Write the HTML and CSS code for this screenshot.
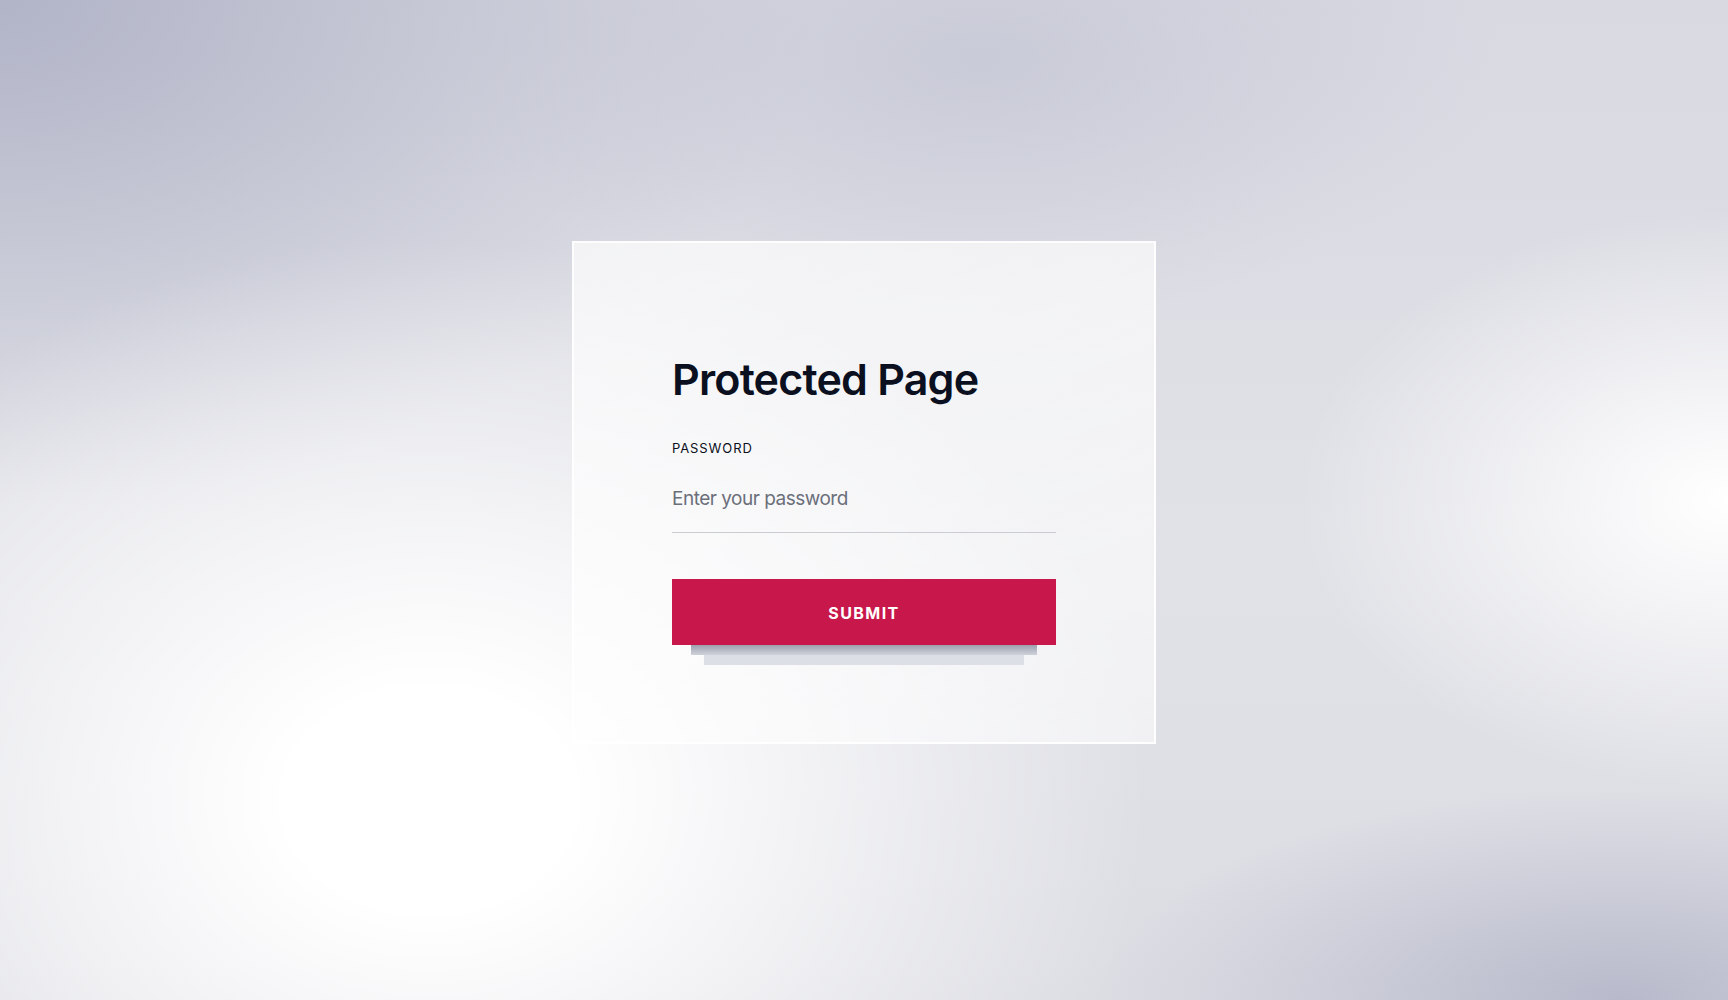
FILE: index.html
```html
<!DOCTYPE html>
<html lang="en">
<head>
<meta charset="UTF-8">
<title>Protected Page</title>
<link rel="stylesheet" href="styles.css">
</head>
<body>

    <div class="page">
        <form class="card" onsubmit="return false;">
            <h1 class="title">Protected Page</h1>

            <label class="label" for="password">Password</label>
            <input class="input" type="password" id="password" placeholder="Enter your password">

            <div class="submit-wrap">
                <button class="submit" type="submit">Submit</button>
            </div>
        </form>
    </div>

</body>
</html>
```

FILE: styles.css
```css
html, body {
    margin: 0;
    padding: 0;
    height: 100%;
}

body {
    font-family: 'Inter', 'Noto Sans', sans-serif;
    color: #0b1020;
    background:
        radial-gradient(ellipse 430px 290px at 1728px 500px, rgba(255,255,255,1) 0%, rgba(255,255,255,0) 100%),
        radial-gradient(ellipse 720px 560px at 430px 800px, rgba(255,255,255,1) 20%, rgba(255,255,255,0) 100%),
        radial-gradient(ellipse 520px 210px at 1620px 1000px, rgba(182,184,202,0.95) 0%, rgba(182,184,202,0) 100%),
        radial-gradient(ellipse 820px 500px at 0px 0px, rgba(177,180,199,1) 0%, rgba(177,180,199,0) 100%),
        radial-gradient(ellipse 520px 260px at 980px 60px, rgba(194,196,211,0.7) 0%, rgba(194,196,211,0) 100%),
        linear-gradient(180deg, #d8d9e1 0%, #e1e2e7 55%, #dcdde3 100%);
}

.page {
    height: 100%;
    display: flex;
    align-items: center;
    justify-content: center;
}

.card {
    box-sizing: border-box;
    width: 584px;
    height: 503px;
    margin-bottom: 15px;
    padding: 110px 98px 0 98px;
    background: linear-gradient(160deg, rgba(255,255,255,0.7) 0%, rgba(255,255,255,0.62) 60%, rgba(255,255,255,0.55) 100%);
    border: 2px solid rgba(255,255,255,0.85);
    display: flex;
    flex-direction: column;
}

.title {
    margin: 0 0 35px 0;
    font-size: 43px;
    line-height: 52px;
    font-weight: 600;
    letter-spacing: -0.8px;
    color: #0b1020;
}

.label {
    font-size: 13px;
    line-height: 16px;
    letter-spacing: 0.9px;
    text-transform: uppercase;
    color: #0b1020;
    margin-bottom: 9px;
}

.input {
    box-sizing: border-box;
    width: 100%;
    height: 68px;
    padding: 0;
    border: none;
    border-bottom: 1px solid #c9ccd3;
    background: transparent;
    font-family: 'Inter', 'Noto Sans', sans-serif;
    font-size: 19px;
    color: #0b1020;
    outline: none;
}
.input::placeholder {
    color: #6b6f7a;
    letter-spacing: -0.5px;
}

.submit-wrap {
    position: relative;
    margin-top: 46px;
    padding-bottom: 20px;
}

.submit-wrap::before {
    content: "";
    position: absolute;
    left: 19px;
    right: 19px;
    bottom: 10px;
    height: 10px;
    background: linear-gradient(180deg, #9ca1ae 0%, #b6bac5 50%, #cfd2da 100%);
    filter: blur(0.6px);
}

.submit-wrap::after {
    content: "";
    position: absolute;
    left: 32px;
    right: 32px;
    bottom: 0;
    height: 10px;
    background: #dcdfe5;
}

.submit {
    position: relative;
    z-index: 1;
    display: block;
    width: 100%;
    height: 66px;
    padding: 1px 0 0 0;
    border: none;
    background: #c8174a;
    color: #ffffff;
    font-family: 'Inter', 'Noto Sans', sans-serif;
    font-size: 16px;
    font-weight: 700;
    letter-spacing: 1.4px;
    text-transform: uppercase;
    cursor: pointer;
}
```
